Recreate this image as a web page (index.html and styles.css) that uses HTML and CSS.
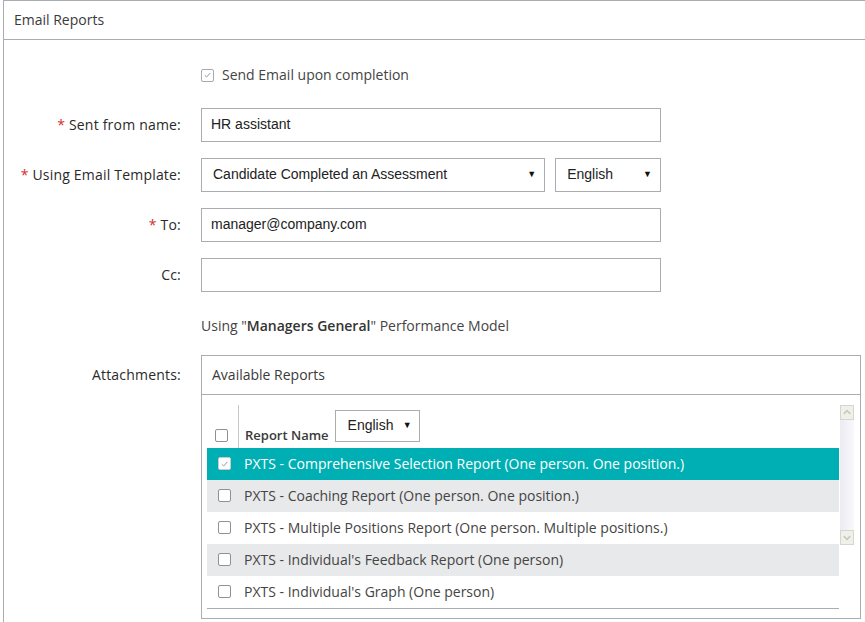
FILE: index.html
```html
<!DOCTYPE html>
<html>
<head>
<meta charset="utf-8">
<link rel="stylesheet" href="styles.css">
</head>
<body>
<div class="panel">
  <div class="panel-header">Email Reports</div>
  <div class="form">
    <div class="row row-check">
      <div class="label"></div>
      <div class="field check-field">
        <span class="cb cb-checked"><svg viewBox="0 0 12 12" width="12" height="12"><path d="M3 6.2 L5.1 8.2 L9 3.8" fill="none" stroke="#8a8f96" stroke-width="1"/></svg></span>
        <span class="check-label">Send Email upon completion</span>
      </div>
    </div>
    <div class="row">
      <div class="label"><span class="req">*</span> Sent from name:</div>
      <div class="field"><div class="input">HR assistant</div></div>
    </div>
    <div class="row">
      <div class="label"><span class="req">*</span> Using Email Template:</div>
      <div class="field selects">
        <div class="select select-template"><span>Candidate Completed an Assessment</span><span class="arrow">▼</span></div>
        <div class="select select-lang"><span>English</span><span class="arrow">▼</span></div>
      </div>
    </div>
    <div class="row">
      <div class="label"><span class="req">*</span> To:</div>
      <div class="field"><div class="input">manager@company.com</div></div>
    </div>
    <div class="row">
      <div class="label">Cc:</div>
      <div class="field"><div class="input"></div></div>
    </div>
    <div class="row row-note">
      <div class="label"></div>
      <div class="field note">Using "<b>Managers General</b>" Performance Model</div>
    </div>
    <div class="row row-attach">
      <div class="label label-attach">Attachments:</div>
      <div class="box">
        <div class="box-header">Available Reports</div>
        <div class="box-body">
          <div class="list">
            <div class="list-head">
              <div class="head-check"><span class="cb"></span></div>
              <div class="head-name">
                <span class="head-title">Report Name</span>
                <div class="select select-small"><span>English</span><span class="arrow">▼</span></div>
              </div>
            </div>
            <div class="item selected"><span class="cb cb-white"><svg viewBox="0 0 12 12" width="12" height="12"><path d="M3 6.2 L5.1 8.2 L9 3.8" fill="none" stroke="#8a8f96" stroke-width="1"/></svg></span><span>PXTS - Comprehensive Selection Report (One person. One position.)</span></div>
            <div class="item alt"><span class="cb"></span><span>PXTS - Coaching Report (One person. One position.)</span></div>
            <div class="item"><span class="cb"></span><span>PXTS - Multiple Positions Report (One person. Multiple positions.)</span></div>
            <div class="item alt"><span class="cb"></span><span>PXTS - Individual's Feedback Report (One person)</span></div>
            <div class="item"><span class="cb"></span><span>PXTS - Individual's Graph (One person)</span></div>
          </div>
          <div class="scrollbar">
            <div class="sb-btn"><svg viewBox="0 0 13 15" width="13" height="15"><path d="M3 9 L6.5 5.5 L10 9" fill="none" stroke="#c6c8bf" stroke-width="1.6"/></svg></div>
            <div class="sb-track"></div>
            <div class="sb-btn"><svg viewBox="0 0 13 15" width="13" height="15"><path d="M3 6 L6.5 9.5 L10 6" fill="none" stroke="#c6c8bf" stroke-width="1.6"/></svg></div>
          </div>
        </div>
      </div>
    </div>
  </div>
</div>
</body>
</html>
```

FILE: styles.css
```css
html, body {
  margin: 0;
  padding: 0;
  background: #fff;
  overflow: hidden;
}
body {
  font-family: "Open Sans", "DejaVu Sans", sans-serif;
  font-size: 14px;
  color: #333;
}
.panel {
  margin-left: 3px;
  height: 621px;
  overflow: hidden;
  border-top: 1px solid #a9acb0;
  border-left: 1px solid #a9acb0;
}
.panel-header {
  height: 38px;
  line-height: 37px;
  padding-left: 10px;
  border-bottom: 1px solid #a9acb0;
  color: #3a3a3a;
}
.form {
  padding-top: 18px;
  display: flex;
  flex-direction: column;
  gap: 16px;
}
.row {
  display: flex;
  align-items: center;
  height: 34px;
}
.row-check {
  align-items: flex-start;
  padding-top: 8px;
  height: 26px;
}
.label {
  width: 177px;
  text-align: right;
  padding-right: 20px;
  flex: none;
  color: #2a2a2a;
  letter-spacing: 0.2px;
  line-height: 20px;
  padding-bottom: 1px;
}
.req {
  color: #d0312d;
}
.field {
  width: 460px;
}
.check-field {
  display: flex;
  align-items: center;
  gap: 8px;
  line-height: 18px;
}
.check-label {
  color: #444;
}
.cb {
  box-sizing: border-box;
  width: 13px;
  height: 13px;
  border: 1px solid #8e9297;
  border-radius: 2px;
  background: #fff;
  display: inline-flex;
  align-items: center;
  justify-content: center;
  flex: none;
}
.cb svg {
  display: block;
}
.cb-checked {
  border-color: #a7abb1;
}
.input {
  box-sizing: border-box;
  height: 34px;
  border: 1px solid #a9acb0;
  padding: 0 9px;
  line-height: 30px;
  font-family: "Liberation Sans", Arial, sans-serif;
  font-size: 14px;
  color: #222;
}
.selects {
  display: flex;
  gap: 10px;
}
.select {
  box-sizing: border-box;
  height: 34px;
  border: 1px solid #a9acb0;
  display: flex;
  align-items: center;
  justify-content: space-between;
  padding: 0 8px 2px 11px;
  font-family: "Liberation Sans", Arial, sans-serif;
  font-size: 14px;
  color: #222;
  background: #fff;
}
.arrow {
  font-size: 9px;
  color: #111;
}
.select-template {
  width: 345px;
}
.select-lang {
  width: 106px;
}
.row-note {
  height: 31px;
}
.note {
  color: #444;
  padding-top: 3px;
}
.note b {
  font-weight: 600;
  color: #333;
}
.row-attach {
  height: auto;
  align-items: flex-start;
}
.label-attach {
  padding-top: 10px;
}
.box {
  width: 660px;
  height: 264px;
  border: 1px solid #a9acb0;
  box-sizing: border-box;
  flex: none;
}
.box-header {
  height: 38px;
  line-height: 38px;
  padding-left: 10px;
  border-bottom: 1px solid #a9acb0;
  color: #3a3a3a;
}
.box-body {
  position: relative;
  padding: 10px 0 0 5px;
}
.list {
  width: 632px;
  border-bottom: 1px solid #a9acb0;
}
.list-head {
  display: flex;
  height: 43px;
}
.head-check {
  width: 32px;
  box-sizing: border-box;
  border-right: 1px solid #c5c7ca;
  display: flex;
  align-items: flex-end;
  padding: 0 0 6px 8px;
}
.head-name {
  display: flex;
  align-items: flex-end;
  padding: 0 0 7px 6px;
  gap: 6px;
}
.head-title {
  font-size: 13px;
  font-weight: 600;
  color: #3a3a3a;
  line-height: 16px;
  margin-bottom: -2px;
}
.select-small {
  width: 85px;
  height: 32px;
  padding: 0 7px 2px 12px;
  margin-bottom: -1px;
}
.item {
  display: flex;
  align-items: center;
  height: 32px;
  padding-left: 11px;
  gap: 13px;
  color: #444;
  line-height: 18px;
  padding-bottom: 1px;
  box-sizing: border-box;
}
.item.alt {
  background: #e8e9eb;
}
.item.selected {
  background: #00afb3;
  color: #fff;
}
.cb-white {
  border-color: #c8cbd0;
}
.scrollbar {
  position: absolute;
  top: 10px;
  left: 638px;
  width: 14px;
  height: 140px;
  display: flex;
  flex-direction: column;
  background: #f3f3f7;
}
.sb-btn {
  box-sizing: border-box;
  height: 15px;
  border: 1px solid #d6d6cc;
  background: #f0f0ea;
  display: flex;
  align-items: center;
  justify-content: center;
}
.sb-track {
  flex: 1;
  background: linear-gradient(to right, #ebebf2, #f8f8fc);
}
```
